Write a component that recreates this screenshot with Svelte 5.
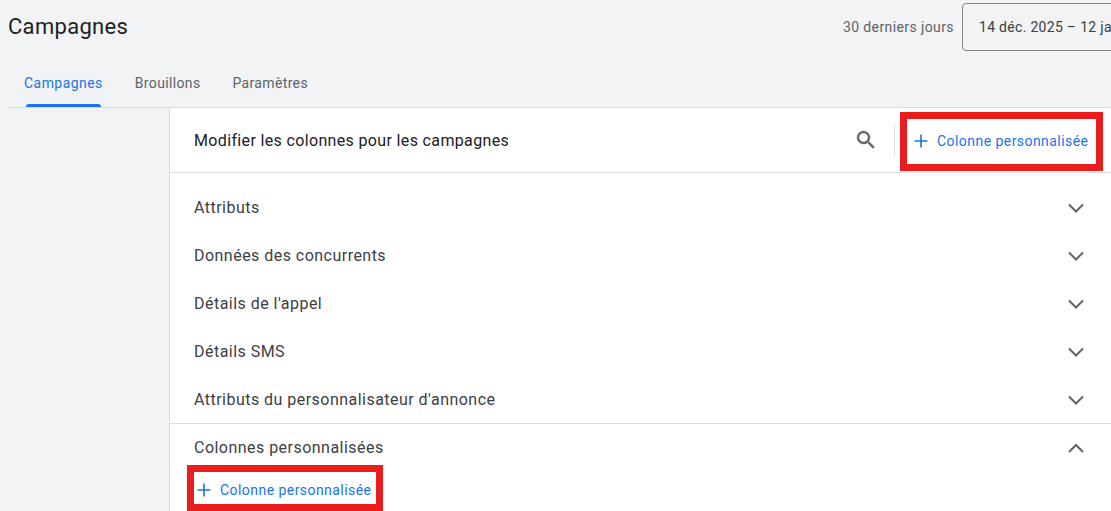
<script>
  const rows = [
    'Attributs',
    'Données des concurrents',
    "Détails de l'appel",
    'Détails SMS',
    "Attributs du personnalisateur d'annonce"
  ];
  const tabs = ['Campagnes', 'Brouillons', 'Paramètres'];
</script>

<div class="page">
  <header class="top">
    <h1>Campagnes</h1>
    <div class="range">
      <span class="range-label">30 derniers jours</span>
      <div class="range-box">14 déc. 2025 – 12 janv. 2026</div>
    </div>
  </header>

  <nav class="tabs">
    {#each tabs as tab, i}
      <div class="tab" class:active={i === 0}>{tab}</div>
    {/each}
  </nav>

  <div class="body">
    <aside class="side"></aside>
    <main class="panel">
      <div class="panel-head">
        <div class="panel-title">Modifier les colonnes pour les campagnes</div>
        <svg class="search" viewBox="0 0 24 24" width="24" height="24" fill="#5f6368" stroke="#5f6368" stroke-width="0.4">
          <path d="M15.5 14h-.79l-.28-.27A6.47 6.47 0 0 0 16 9.5 6.5 6.5 0 1 0 9.5 16c1.61 0 3.09-.59 4.23-1.57l.27.28v.79l5 4.99L20.49 19l-4.99-5zm-6 0C7.01 14 5 11.99 5 9.5S7.01 5 9.5 5 14 7.01 14 9.5 11.99 14 9.5 14z"/>
        </svg>
        <div class="sep"></div>
        <div class="marked head-btn">
          <svg viewBox="0 0 16 16" width="16" height="16" stroke="#1a73e8" stroke-width="1.6" fill="none"><path d="M8 1.5v13M1.5 8h13"/></svg>
          <span>Colonne personnalisée</span>
        </div>
      </div>

      <div class="list">
        {#each rows as row}
          <div class="row">
            <span>{row}</span>
            <svg viewBox="0 0 24 24" width="24" height="24" fill="none" stroke="#5f6368" stroke-width="2"><path d="M5 9.5l7 7 7-7"/></svg>
          </div>
        {/each}
      </div>

      <div class="section">
        <div class="row open">
          <span>Colonnes personnalisées</span>
          <svg viewBox="0 0 24 24" width="24" height="24" fill="none" stroke="#5f6368" stroke-width="2"><path d="M5 16l7-7 7 7"/></svg>
        </div>
        <div class="marked section-btn">
          <svg viewBox="0 0 16 16" width="16" height="16" stroke="#1a73e8" stroke-width="1.6" fill="none"><path d="M8 1.5v13M1.5 8h13"/></svg>
          <span>Colonne personnalisée</span>
        </div>
      </div>
    </main>
  </div>
</div>

<style>
  :global(body) {
    margin: 0;
    background: #f1f3f4;
  }

  .page {
    width: 1111px;
    height: 511px;
    overflow: hidden;
    font-family: Roboto, "Liberation Sans", sans-serif;
    color: #3c4043;
  }

  .top {
    display: flex;
    justify-content: space-between;
    height: 59px;
    padding: 3px 0 0 8px;
    box-sizing: border-box;
  }

  h1 {
    margin: 0;
    padding-top: 9px;
    font-size: 22px;
    line-height: 30px;
    font-weight: 400;
    letter-spacing: 0.3px;
    color: #202124;
  }

  .range {
    display: flex;
    align-items: flex-start;
    gap: 8px;
    margin-right: -151px;
  }

  .range-label {
    font-size: 14px;
    line-height: 48px;
    color: #5f6368;
    letter-spacing: 0.4px;
  }

  .range-box {
    width: 300px;
    height: 48px;
    box-sizing: border-box;
    border: 1px solid #80868b;
    border-radius: 4px;
    padding-left: 16px;
    font-size: 14px;
    line-height: 46px;
    letter-spacing: 0.3px;
    white-space: nowrap;
  }

  .tabs {
    display: flex;
    height: 48px;
    margin-left: 8px;
    padding-left: 16px;
    border-bottom: 1px solid #dadce0;
    box-sizing: content-box;
  }

  .tab {
    position: relative;
    margin-right: 32px;
    font-size: 14px;
    font-weight: 450;
    line-height: 48px;
    letter-spacing: 0.35px;
    color: #5f6368;
  }

  .tab.active {
    letter-spacing: 0.45px;
    color: #1a73e8;
  }

  .tab.active::after {
    content: '';
    position: absolute;
    left: 2px;
    right: 2px;
    bottom: 0;
    height: 3px;
    border-radius: 3px 3px 0 0;
    background: #1a73e8;
  }

  .body {
    display: flex;
  }

  .side {
    width: 169px;
    flex: none;
  }

  .panel {
    flex: 1;
    background: #fff;
    border-left: 1px solid #dadce0;
  }

  .panel-head {
    display: flex;
    align-items: center;
    height: 64px;
    padding: 0 8px 0 24px;
    border-bottom: 1px solid #dadce0;
  }

  .panel-title {
    flex: 1;
    font-size: 16px;
    font-weight: 450;
    color: #202124;
    letter-spacing: 0.35px;
  }

  .search {
    margin-right: 16px;
  }

  .sep {
    width: 1px;
    height: 32px;
    background: #dadce0;
    margin-right: 5px;
  }

  .marked {
    display: flex;
    align-items: center;
    box-sizing: border-box;
    border: 7px solid #ea1c1c;
    background: #fff;
    font-size: 14px;
    font-weight: 450;
    letter-spacing: 0.45px;
    color: #1a73e8;
  }

  .head-btn {
    width: 203px;
    height: 59px;
    margin-top: 2px;
    padding-left: 6px;
    gap: 8px;
  }

  .list {
    padding: 10px 0 0;
    border-bottom: 1px solid #dadce0;
  }

  .row {
    display: flex;
    align-items: center;
    justify-content: space-between;
    height: 48px;
    padding: 0 23px 0 24px;
    font-size: 16px;
    font-weight: 450;
    letter-spacing: 0.47px;
    color: #3c4043;
  }

  .row.open {
    height: 47px;
  }

  .section-btn {
    width: 196px;
    height: 46px;
    margin: -6px 0 0 17px;
    padding: 3px 0 0 2px;
    gap: 8px;
  }
</style>
